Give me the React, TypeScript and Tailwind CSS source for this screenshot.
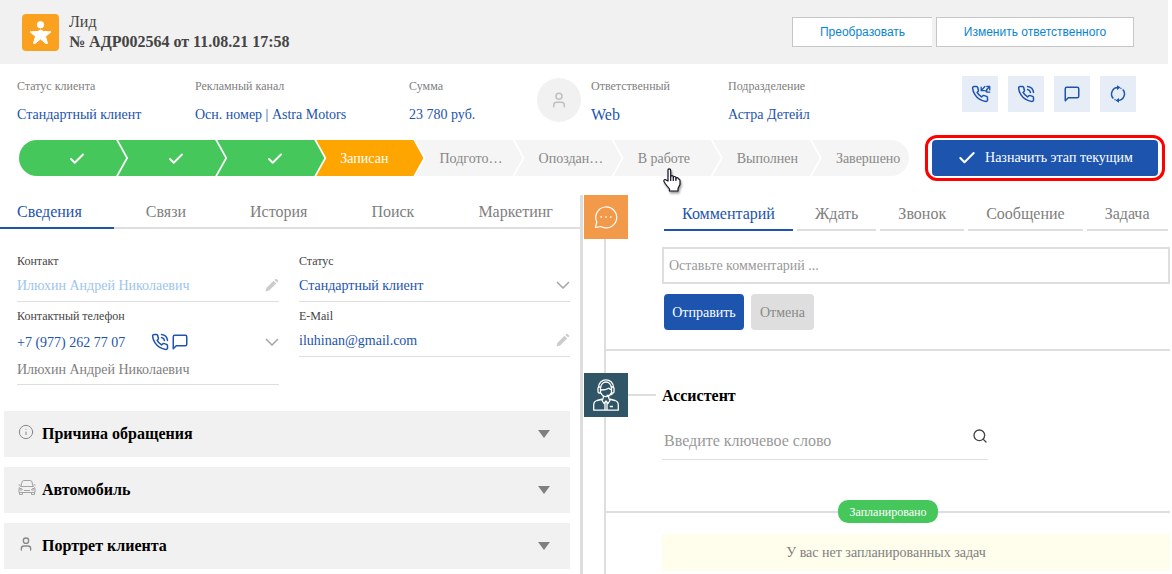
import React, { useState } from 'react'
import { Check, Info, Search, User } from 'lucide-react'

type Stage = { label: string; state: 'done' | 'current' | 'next' }

const stages: Stage[] = [
    { label: 'Новый', state: 'done' },
    { label: 'Назначен', state: 'done' },
    { label: 'Обработан', state: 'done' },
    { label: 'Записан', state: 'current' },
    { label: 'Подгото…', state: 'next' },
    { label: 'Опоздан…', state: 'next' },
    { label: 'В работе', state: 'next' },
    { label: 'Выполнен', state: 'next' },
    { label: 'Завершено', state: 'next' },
]

const stageColors = {
    done: 'bg-[#46c75b] text-white',
    current: 'bg-[#ffa500] text-white',
    next: 'bg-[#f5f5f5] text-[#888888]',
}

const infoTabs = ['Сведения', 'Связи', 'История', 'Поиск', 'Маркетинг']

const actionTabs = ['Комментарий', 'Ждать', 'Звонок', 'Сообщение', 'Задача']

function PhoneIcon({ className, transfer = false }: { className?: string; transfer?: boolean }) {
    return (
        <svg viewBox="0 0 24 24" className={className} fill="none" stroke="currentColor" strokeWidth="2" strokeLinecap="round" strokeLinejoin="round" overflow="visible">
            <path d="M22 16.92v3a2 2 0 0 1-2.18 2 19.79 19.79 0 0 1-8.63-3.07 19.5 19.5 0 0 1-6-6A19.79 19.79 0 0 1 2.12 4.18 2 2 0 0 1 4.11 2h3a2 2 0 0 1 2 1.72c.13.96.36 1.9.7 2.81a2 2 0 0 1-.45 2.11L8.09 9.91a16 16 0 0 0 6 6l1.27-1.27a2 2 0 0 1 2.11-.45c.91.34 1.85.57 2.81.7A2 2 0 0 1 22 16.92z" />
            {transfer
                ? <path d="M18.500 2L14 7M13.500 3v4.500h4.500M19.500 8l5-5.500M21 2h4v4.500M21 5.500v4h4" strokeWidth="1.700" />
                : <path d="M14.050 2a9 9 0 0 1 8 7.940M14.050 6A5 5 0 0 1 18 10" />}
        </svg>
    )
}

function MessageIcon({ className }: { className?: string }) {
    return (
        <svg viewBox="0 0 24 24" className={className} fill="none" stroke="currentColor" strokeWidth="2" strokeLinecap="round" strokeLinejoin="round">
            <path d="M21 15a2 2 0 0 1-2 2H7l-4 4V5a2 2 0 0 1 2-2h14a2 2 0 0 1 2 2z" />
        </svg>
    )
}

function RefreshIcon() {
    return (
        <svg viewBox="0 0 18 18" className="size-[18px]" fill="none" stroke="currentColor" strokeWidth="1.500">
            <path d="M9 2.600A6.400 6.400 0 0 0 4.300 13.400M9 15.400A6.400 6.400 0 0 0 13.700 4.600M11.500 3.100l1 .5M6.500 14.900l-1-.5" />
            <path d="M8 .2l3.500 2.400L8 5zM10 13l-3.500 2.400 3.500 2.400z" fill="currentColor" stroke="none" />
        </svg>
    )
}

function CarIcon() {
    return (
        <svg viewBox="0 0 18 16" className="h-4 w-[18px]" fill="none" stroke="#a3a3a3" strokeWidth="1">
            <path d="M3 6.500l1-4.500q.3-1.500 1.800-1.500h6.400q1.500 0 1.800 1.500l1 4.500M2.500 6.500h13q1.500.8 1.500 2.500v3.500H1V9q0-1.700 1.500-2.500zM1.500 12.500v2h3v-2M13.500 12.500v2h3v-2M6 10.500h6" />
            <path d="M1.500 8.500h2l1 1.500H1.500M16.500 8.500h-2l-1 1.500h3M.5 5h2M15.500 5h2" />
        </svg>
    )
}

function ChatIcon() {
    return (
        <svg viewBox="0 0 24 24" className="size-6" fill="none" stroke="white" strokeWidth="1.200" strokeLinejoin="round">
            <path d="M1.500 22.500l1.300-5.500A10.500 10.500 0 1 1 7 21.500z" />
            <path d="M6.500 12H8M11.200 12h1.600M16 12h1.500" strokeWidth="1.600" />
        </svg>
    )
}

function OperatorIcon() {
    return (
        <svg viewBox="0 0 26 32" className="h-8 w-[26px]" fill="none" stroke="white" strokeWidth="1.300" strokeLinejoin="round">
            <path d="M5.500 8.500a7.500 7.700 0 0 1 15 0M7.800 8.500a5.200 5.500 0 0 1 10.400 0" />
            <path d="M7.500 8H6.300a1.300 1.300 0 0 0-1.300 1.300v3.400a1.300 1.300 0 0 0 1.300 1.300h1.200zM18.500 8h1.200a1.300 1.300 0 0 1 1.300 1.300v3.400a1.300 1.300 0 0 1-1.300 1.300h-1.200z" />
            <path d="M7.800 11q5.200 0 8-1.800 1 1.300 2.400 1.300M8 14q1.500 3.700 5 3.700t5-3.700M19.500 14.500q-1.500 1.800-6 1.800M10.300 17.300v2.500M15.700 17.300v2.500" />
            <path d="M10 20l-6 1.500q-3.300 1-3.300 4.500v5.200h24.600V26q0-3.500-3.300-4.500L16 20M10 20l-1 1.500 2 3 2-2.500 2 2.500 2-3-1-1.500M12 23.500v7.500M14 23.500v7.500M16.800 27.500H20" />
        </svg>
    )
}

function PencilIcon() {
    return (
        <svg viewBox="0 0 14 14" className="size-3.5 shrink-0" fill="#cccccc">
            <path d="M.5 13.500l1-3.700 7-7 2.700 2.700-7 7zM9.400 1.900l1-1q.6-.5 1.200 0l1.500 1.500q.5.600 0 1.200l-1 1z" />
        </svg>
    )
}

function ChevronIcon() {
    return (
        <svg viewBox="0 0 14 8" className="h-2 w-3.5 shrink-0" fill="none" stroke="#a6a6a6" strokeWidth="1.500">
            <path d="M1 1l6 6 6-6" />
        </svg>
    )
}

// hand pointer over the hovered stage
function Cursor() {
    return (
        <svg viewBox="0 0 18 24" className="pointer-events-none absolute top-7 left-[49px] z-10 h-6 w-[18px] drop-shadow-[1px_2px_1px_rgba(0,0,0,0.4)]" fill="white" stroke="#111122" strokeWidth="1.200" strokeLinejoin="round">
            <path d="M5 13V2.500q0-1.700 1.300-1.700T7.700 2.500V9q0-1.300 1.300-1.300t1.300 1.300v.8q0-1.300 1.300-1.300t1.300 1.300v1q0-1.200 1.200-1.200t1.200 1.200Q17 11 17 12.500v4l-2 4v2.500H6.500v-2l-4-5L1 13.500q-.5-1.300.5-1.800t2 .5z" />
            <path d="M7.700 9v4M10.300 9.500V13M12.900 10.500V13" />
        </svg>
    )
}

function SummaryItem({ label, value, className, valueClassName = 'text-sm' }: { label: string; value: string; className?: string; valueClassName?: string }) {
    return (
        <div className={className}>
            <p className="text-xs leading-4 text-[#808080]">{label}</p>
            <p className={`mt-3 whitespace-nowrap text-[#1c54ae] ${valueClassName}`}>
                <span className="block leading-[18px]">{value}</span>
            </p>
        </div>
    )
}

function IconButton({ label, children }: { label: string; children: React.ReactNode }) {
    return (
        <button type="button" aria-label={label} className="flex size-9 cursor-pointer items-center justify-center bg-[#e6edf7]">
            {children}
        </button>
    )
}

function Stages() {
    const last = stages.length - 1

    return (
        <div className="flex h-9 min-w-0 flex-1">
            {stages.map((stage, i) => (
                <div key={stage.label} className={`relative flex min-w-0 ${i > 0 ? '-ml-2' : ''} ${i === last ? 'flex-[97]' : 'flex-[107]'}`}>
                    <button
                        type="button"
                        aria-label={stage.label}
                        className={`flex flex-1 cursor-pointer items-center pt-0.5 text-sm whitespace-nowrap ${stageColors[stage.state]} ${
                            i === 0
                                ? 'rounded-l-full [clip-path:polygon(0_0,calc(100%-10px)_0,100%_50%,calc(100%-10px)_100%,0_100%)]'
                                : i === last
                                    ? 'rounded-r-full [clip-path:polygon(0_0,100%_0,100%_100%,0_100%,10px_50%)]'
                                    : '[clip-path:polygon(0_0,calc(100%-10px)_0,100%_50%,calc(100%-10px)_100%,0_100%,10px_50%)]'
                        } ${stage.state === 'done' ? 'justify-center pl-2' : 'pl-6'}`}
                    >
                        {stage.state === 'done' ? <Check className="size-[18px]" strokeWidth={2.5} /> : stage.label}
                    </button>
                    {stage.label === 'В работе' && <Cursor />}
                </div>
            ))}
        </div>
    )
}

function Section({ icon, title }: { icon: React.ReactNode; title: string }) {
    return (
        <button type="button" className="flex h-[46px] cursor-pointer items-center bg-[#f1f1f1] pr-5 pl-3.5 text-left">
            <span className="flex w-6 pb-1 text-[#888888]">{icon}</span>
            <span className="flex-1 text-base font-bold text-black">{title}</span>
            <svg viewBox="0 0 12 8" className="h-2 w-3" fill="#808080">
                <path d="M0 0h12L6 8z" />
            </svg>
        </button>
    )
}

function ContactFields() {
    const [contact, setContact] = useState('Илюхин Андрей Николаевич')
    const [email, setEmail] = useState('iluhinan@gmail.com')

    return (
        <div className="grid grid-cols-[262fr_271fr] gap-x-5 pt-6 pr-2.5 pl-[17px] text-sm">
            <div>
                <label htmlFor="contact" className="block text-xs leading-4">Контакт</label>
                <div className="flex h-[33px] items-center border-b border-[#dedede]">
                    <input id="contact" value={contact} onChange={e => setContact(e.target.value)} className="min-w-0 flex-1 pt-0.5 text-[#9cc5ec] outline-none" />
                    <PencilIcon />
                </div>

                <p className="mt-1.5 text-xs leading-4">Контактный телефон</p>
                <div className="flex h-9 items-center text-[#1c54ae]">
                    <a href="tel:+79772627707" className="mr-[26px] pt-0.5 whitespace-nowrap">+7 (977) 262 77 07</a>
                    <button type="button" aria-label="Позвонить" className="cursor-pointer"><PhoneIcon className="size-[18px]" /></button>
                    <button type="button" aria-label="Написать" className="ml-0.5 cursor-pointer"><MessageIcon className="size-[18px]" /></button>
                    <button type="button" aria-label="Другие телефоны" className="ml-auto cursor-pointer"><ChevronIcon /></button>
                </div>
                <p className="border-b border-[#dedede] pb-1 leading-5 text-[#808080]">Илюхин Андрей Николаевич</p>
            </div>

            <div>
                <label htmlFor="status" className="block text-xs leading-4">Статус</label>
                <div className="flex h-[33px] items-center border-b border-[#dedede]">
                    <select id="status" className="min-w-0 flex-1 cursor-pointer appearance-none pt-0.5 text-[#1c54ae] outline-none">
                        <option>Стандартный клиент</option>
                    </select>
                    <ChevronIcon />
                </div>

                <label htmlFor="email" className="mt-1.5 block text-xs leading-4">E-Mail</label>
                <div className="flex h-[33px] items-center border-b border-[#dedede]">
                    <input id="email" type="email" value={email} onChange={e => setEmail(e.target.value)} className="min-w-0 flex-1 pt-0.5 text-[#1c54ae] outline-none" />
                    <PencilIcon />
                </div>
            </div>
        </div>
    )
}

function TimelineMark({ className, children }: { className: string; children: React.ReactNode }) {
    return (
        <div className="flex w-11 shrink-0 flex-col">
            <div className={`flex size-11 items-center justify-center ${className}`}>{children}</div>
            <div className="ml-5 w-0.5 flex-1 bg-[#dedede]" />
        </div>
    )
}

export default function App() {
    const [infoTab, setInfoTab] = useState('Сведения')
    const [actionTab, setActionTab] = useState('Комментарий')
    const [comment, setComment] = useState('')
    const [keyword, setKeyword] = useState('')

    return (
        <div className="flex min-h-screen flex-col bg-white font-['Liberation_Serif',serif] text-[#444444]">
            <header className="mr-1 flex h-16 items-center bg-[#f1f1f1] pr-[34px] pl-[22px]">
                <div className="rounded-sm bg-[#faa21f]">
                    <svg viewBox="0 0 37 37" className="size-[37px]" fill="white" stroke="white" strokeLinejoin="round">
                        <circle cx="18.500" cy="10.800" r="3.200" />
                        <path d="M8 17.800l7.500-.3 3-1.500 3 1.500 7.500.3-5.500 4.700 2 6.800-1.500.2-5.500-4.500-5.500 4.500-1.500-.2 2-6.800z" />
                    </svg>
                </div>
                <div className="ml-2.5 flex-1 text-base leading-5">
                    <p>Лид</p>
                    <h1 className="font-bold">№ АДР002564 от 11.08.21 17:58</h1>
                </div>
                <div className="flex gap-1 font-['Liberation_Sans',sans-serif] text-xs text-[#0a85d1]">
                    <button type="button" className="h-[30px] w-[140px] cursor-pointer border border-r-0 border-[#c6c6c6] bg-white">Преобразовать</button>
                    <button type="button" className="h-[30px] w-[198px] cursor-pointer border border-[#c6c6c6] bg-white">Изменить ответственного</button>
                </div>
            </header>

            <section className="flex h-[71px] pt-3.5 pr-9 pl-[17px]">
                <SummaryItem className="w-[178px]" label="Статус клиента" value="Стандартный клиент" />
                <SummaryItem className="w-[214px]" label="Рекламный канал" value="Осн. номер | Astra Motors" />
                <SummaryItem className="w-32" label="Сумма" value="23 780 руб." />
                <div className="mr-2.5 flex size-11 items-center justify-center rounded-full bg-[#f1f1f1]">
                    <User className="size-[18px] text-[#c0c0c0]" />
                </div>
                <SummaryItem className="w-[137px]" label="Ответственный" value="Web" valueClassName="text-base" />
                <SummaryItem className="flex-1" label="Подразделение" value="Астра Детейл" />
                <div className="-mt-0.5 flex gap-2.5 text-[#1c54ae]">
                    <IconButton label="Переадресовать"><PhoneIcon transfer className="size-[18px]" /></IconButton>
                    <IconButton label="Позвонить"><PhoneIcon className="size-[18px]" /></IconButton>
                    <IconButton label="Написать"><MessageIcon className="size-[18px]" /></IconButton>
                    <IconButton label="Обновить"><RefreshIcon /></IconButton>
                </div>
            </section>

            <section className="flex items-center gap-4 pr-[7px] pl-[19px]">
                <Stages />
                <div className="rounded-xl border-[3px] border-[#ff0000] px-1 py-0.5">
                    <button type="button" className="flex h-9 w-[226px] cursor-pointer items-center justify-center gap-2 rounded bg-[#1c54ae] text-sm text-white">
                        <Check className="size-5" strokeWidth={2.5} />
                        Назначить этап текущим
                    </button>
                </div>
            </section>

            <main className="mt-3.5 flex flex-1">
                <div className="w-1/2 max-w-[583px] border-r-[3px] border-[#dedede]">
                    <nav className="flex border-b-2 border-[#dedede] text-base">
                        {infoTabs.map(tab => (
                            <button
                                key={tab}
                                type="button"
                                onClick={() => setInfoTab(tab)}
                                className={`-mb-0.5 h-[34px] cursor-pointer border-b-2 px-8 pt-0.5 first:pl-[17px] ${tab === infoTab ? 'border-[#1c54ae] text-[#1c54ae]' : 'border-transparent text-[#808080]'}`}
                            >
                                {tab}
                            </button>
                        ))}
                    </nav>

                    <ContactFields />

                    <div className="mt-[26px] flex flex-col gap-2.5 pr-2.5 pl-1">
                        <Section icon={<Info className="size-4" strokeWidth={1.5} />} title="Причина обращения" />
                        <Section icon={<CarIcon />} title="Автомобиль" />
                        <Section icon={<User className="size-4" />} title="Портрет клиента" />
                    </div>
                </div>

                <div className="flex min-w-0 flex-1 flex-col pr-0.5 pl-px">
                    <div className="flex h-[178px]">
                        <TimelineMark className="bg-[#f39a4a]"><ChatIcon /></TimelineMark>
                        <div className="min-w-0 flex-1">
                            <nav className="flex gap-1 pl-9 text-base">
                                {actionTabs.map(tab => (
                                    <button
                                        key={tab}
                                        type="button"
                                        onClick={() => setActionTab(tab)}
                                        className={`h-9 cursor-pointer border-b-2 px-[18px] pt-1 ${tab === actionTab ? 'border-[#1c54ae] text-[#1c54ae]' : 'border-[#dedede] text-[#808080]'}`}
                                    >
                                        {tab}
                                    </button>
                                ))}
                            </nav>
                            <form onSubmit={e => e.preventDefault()} className="mt-4 pl-[34px] text-sm">
                                <input
                                    type="text"
                                    aria-label="Комментарий"
                                    placeholder="Оставьте комментарий ..."
                                    value={comment}
                                    onChange={e => setComment(e.target.value)}
                                    className="block h-[37px] w-full border-2 border-[#dedede] px-[5px] placeholder-[#999999] outline-none"
                                />
                                <div className="mt-2.5 flex gap-[7px] pl-0.5">
                                    <button type="submit" className="h-9 w-20 cursor-pointer rounded bg-[#1c54ae] pt-0.5 text-white">Отправить</button>
                                    <button type="button" onClick={() => setComment('')} className="h-9 w-[63px] cursor-pointer rounded bg-[#dedede] pt-0.5 text-[#888888]">Отмена</button>
                                </div>
                            </form>
                            <hr className="mt-[19px] -ml-[22px] border-t-2 border-[#dedede]" />
                        </div>
                    </div>

                    <div className="flex flex-1">
                        <TimelineMark className="bg-[#2f5566]"><OperatorIcon /></TimelineMark>
                        <div className="min-w-0 flex-1">
                            <div className="flex h-11 items-center gap-1.5">
                                <span className="h-0.5 w-7 bg-[#dedede]" />
                                <h2 className="pt-0.5 text-base font-bold text-black">Ассистент</h2>
                            </div>
                            <label className="mt-[5px] ml-[34px] flex h-[38px] max-w-[326px] items-center border-b border-[#dedede] pl-0.5 text-base">
                                <input
                                    type="text"
                                    aria-label="Ключевое слово"
                                    placeholder="Введите ключевое слово"
                                    value={keyword}
                                    onChange={e => setKeyword(e.target.value)}
                                    className="min-w-0 flex-1 placeholder-[#999999] outline-none"
                                />
                                <Search className="mb-2.5 size-4" />
                            </label>
                            <div className="mt-10 -ml-[22px] flex items-center">
                                <span className="h-0.5 flex-1 bg-[#dedede]" />
                                <span className="flex h-[23px] w-[100px] items-center justify-center rounded-[10px] bg-[#46c75b] text-xs text-white">Запланировано</span>
                                <span className="h-0.5 flex-1 bg-[#dedede]" />
                            </div>
                            <p className="mt-[11px] ml-[34px] bg-[#fffdeb] pr-[60px] text-center text-sm leading-[37px] text-[#808080]">У вас нет запланированных задач</p>
                        </div>
                    </div>
                </div>
            </main>
        </div>
    )
}
